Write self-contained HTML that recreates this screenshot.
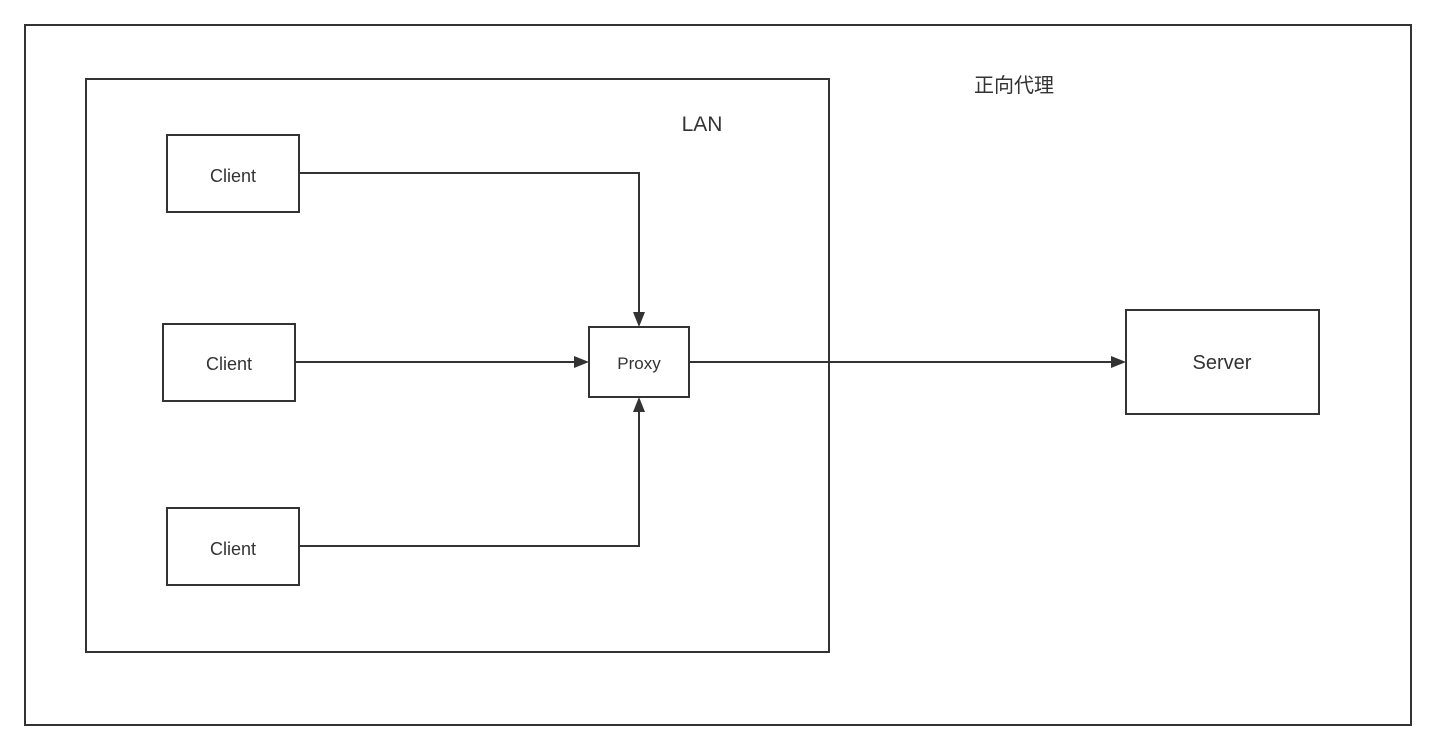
<!DOCTYPE html>
<html><head><style>
html,body{margin:0;padding:0;background:#fff;}
text{font-family:"Liberation Sans","Noto Sans CJK SC",sans-serif;fill:#333;}
</style></head><body>
<svg width="1436" height="751" xmlns="http://www.w3.org/2000/svg">
<g fill="none" stroke="#333" stroke-width="2">
<rect x="25" y="25" width="1386" height="700"/>
<rect x="86" y="79" width="743" height="573"/>
<rect x="167" y="135" width="132" height="77"/>
<rect x="163" y="324" width="132" height="77"/>
<rect x="167" y="508" width="132" height="77"/>
<rect x="589" y="327" width="100" height="70"/>
<rect x="1126" y="310" width="193" height="104"/>
<path d="M299 173H639V314"/>
<path d="M295 362H576"/>
<path d="M299 546H639V410"/>
<path d="M689 362H1113"/>
</g>
<g fill="#333">
<polygon points="633,312 645,312 639,327"/>
<polygon points="574,356 574,368 589,362"/>
<polygon points="633,412 645,412 639,397"/>
<polygon points="1111,356 1111,368 1126,362"/>
</g>
<text x="233" y="182" font-size="18" text-anchor="middle">Client</text>
<text x="229" y="370" font-size="18" text-anchor="middle">Client</text>
<text x="233" y="555" font-size="18" text-anchor="middle">Client</text>
<text x="639" y="369" font-size="17" text-anchor="middle">Proxy</text>
<text x="1222" y="369" font-size="20" text-anchor="middle">Server</text>
<text x="702" y="131" font-size="21" text-anchor="middle">LAN</text>
<text x="1014" y="92" font-size="20" text-anchor="middle">正向代理</text>
</svg>
</body></html>
